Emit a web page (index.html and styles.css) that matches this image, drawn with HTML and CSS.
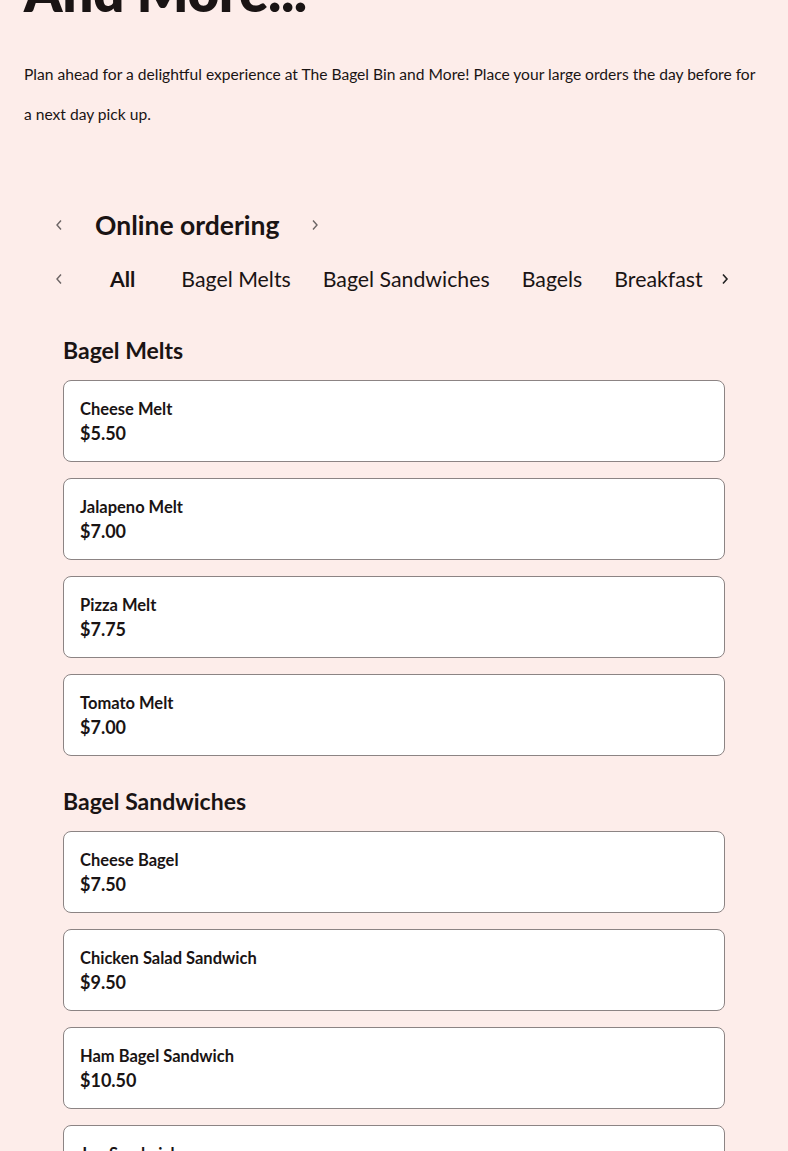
FILE: index.html
```html
<!DOCTYPE html>
<html>
<head>
<meta charset="utf-8">
<link rel="stylesheet" href="styles.css">
</head>
<body>
<div class="page">
  <h1 class="title">And More...</h1>
  <p class="intro">Plan ahead for a delightful experience at The Bagel Bin and More! Place your large orders the day before for a next day pick up.</p>

  <div class="ordering">
    <div class="head-row">
      <span class="chev"><svg width="8" height="12" viewBox="0 0 8 12"><polyline points="6,1.5 2,6 6,10.5" fill="none" stroke="#6b6464" stroke-width="1.4"/></svg></span>
      <h2 class="order-title">Online ordering</h2>
      <span class="chev"><svg width="8" height="12" viewBox="0 0 8 12"><polyline points="2,1.5 6,6 2,10.5" fill="none" stroke="#6b6464" stroke-width="1.4"/></svg></span>
    </div>
    <div class="tabs">
      <span class="chev"><svg width="8" height="12" viewBox="0 0 8 12"><polyline points="6,1.5 2,6 6,10.5" fill="none" stroke="#6b6464" stroke-width="1.4"/></svg></span>
      <div class="tab-list">
        <span class="tab active">All</span>
        <span class="tab">Bagel Melts</span>
        <span class="tab">Bagel Sandwiches</span>
        <span class="tab">Bagels</span>
        <span class="tab">Breakfast</span>
      </div>
      <span class="chev"><svg width="8" height="12" viewBox="0 0 8 12"><polyline points="2,1.5 6,6 2,10.5" fill="none" stroke="#222" stroke-width="1.6"/></svg></span>
    </div>

    <section class="menu">
      <h3 class="cat">Bagel Melts</h3>
      <div class="items">
        <div class="card"><div class="name">Cheese Melt</div><div class="price">$5.50</div></div>
        <div class="card"><div class="name">Jalapeno Melt</div><div class="price">$7.00</div></div>
        <div class="card"><div class="name">Pizza Melt</div><div class="price">$7.75</div></div>
        <div class="card"><div class="name">Tomato Melt</div><div class="price">$7.00</div></div>
      </div>
      <h3 class="cat">Bagel Sandwiches</h3>
      <div class="items">
        <div class="card"><div class="name">Cheese Bagel</div><div class="price">$7.50</div></div>
        <div class="card"><div class="name">Chicken Salad Sandwich</div><div class="price">$9.50</div></div>
        <div class="card"><div class="name">Ham Bagel Sandwich</div><div class="price">$10.50</div></div>
        <div class="card"><div class="name">Joe Sandwich</div><div class="price">$9.00</div></div>
      </div>
    </section>
  </div>
</div>
</body>
</html>
```

FILE: styles.css
```css
html, body {
  margin: 0;
  padding: 0;
  background: #fdedea;
}
body {
  font-family: "Lato", "Noto Sans", sans-serif;
  color: #1a1414;
  overflow: hidden;
  height: 1151px;
}
.page {
  padding: 0 24px;
}
.title {
  margin: -40px 0 0 0;
  font-size: 54px;
  line-height: 64px;
  font-weight: 800;
  letter-spacing: 0;
}
.intro {
  margin: 30px 0 0 0;
  font-size: 15.6px;
  line-height: 40px;
  font-weight: 400;
}
.ordering {
  margin-top: 71px;
  padding: 0 39px;
}
.head-row {
  display: flex;
  align-items: center;
  height: 40px;
  margin-left: -8px;
}
.chev {
  display: flex;
  align-items: center;
  justify-content: center;
  width: 8px;
  height: 12px;
  flex: none;
}
.order-title {
  margin: 0 32px 0 32px;
  font-size: 26.5px;
  font-weight: 700;
  white-space: nowrap;
}
.tabs {
  display: flex;
  align-items: center;
  margin-top: 14px;
  height: 40px;
  margin-left: -8px;
}
.tab-list {
  display: flex;
  align-items: center;
  gap: 32px;
  margin: 0 18px 0 33px;
}
.tab {
  font-size: 21.3px;
  font-weight: 400;
  white-space: nowrap;
}
.tab.active {
  font-weight: 700;
  padding: 0 14px;
}
.menu {
  margin-top: 36px;
}
.cat {
  margin: 0;
  font-size: 23px;
  line-height: 30px;
  font-weight: 700;
}
.items {
  display: flex;
  flex-direction: column;
  gap: 16px;
  margin: 15px 0 30px 0;
}
.card {
  height: 82px;
  box-sizing: border-box;
  background: #fff;
  border: 1px solid #8c8484;
  border-radius: 8px;
  padding: 16px 16px 0 16px;
}
.name {
  font-size: 16.5px;
  line-height: 24px;
  font-weight: 700;
}
.price {
  font-size: 18px;
  line-height: 24px;
  font-weight: 700;
}
```
